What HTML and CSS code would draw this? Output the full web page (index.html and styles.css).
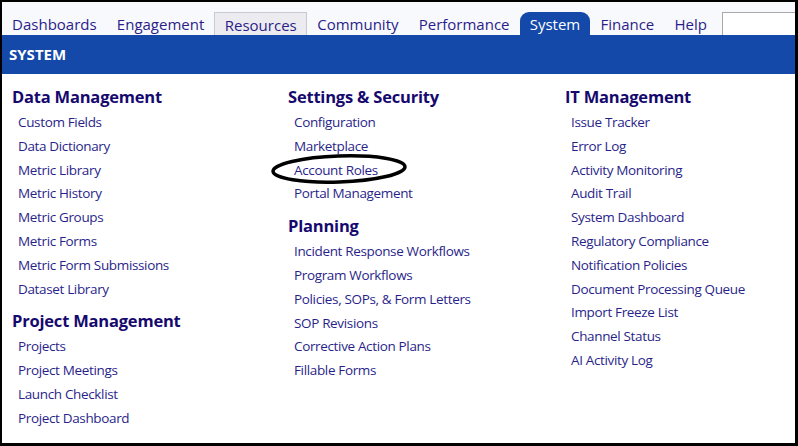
FILE: index.html
```html
<!DOCTYPE html>
<html lang="en">
<head>
    <meta charset="UTF-8">
    <meta name="viewport" content="width=device-width, initial-scale=1.0">
    <title>System</title>
    <link rel="stylesheet" href="styles.css">
</head>
<body>
<div class="frame">

    <nav class="topnav">
        <a class="tab">Dashboards</a>
        <a class="tab">Engagement</a>
        <a class="tab hover">Resources</a>
        <a class="tab">Community</a>
        <a class="tab">Performance</a>
        <a class="tab active">System</a>
        <a class="tab">Finance</a>
        <a class="tab">Help</a>
        <input class="search" type="text">
    </nav>

    <div class="section-bar">SYSTEM</div>

    <div class="menu">
        <div class="col">
            <h2>Data Management</h2>
            <a>Custom Fields</a>
            <a>Data Dictionary</a>
            <a>Metric Library</a>
            <a>Metric History</a>
            <a>Metric Groups</a>
            <a>Metric Forms</a>
            <a>Metric Form Submissions</a>
            <a>Dataset Library</a>
            <h2>Project Management</h2>
            <a>Projects</a>
            <a>Project Meetings</a>
            <a>Launch Checklist</a>
            <a>Project Dashboard</a>
        </div>
        <div class="col">
            <h2>Settings &amp; Security</h2>
            <a>Configuration</a>
            <a>Marketplace</a>
            <a class="circled">Account Roles
                <svg class="ring" width="140" height="36" viewBox="0 0 140 36">
                    <ellipse cx="70" cy="17" rx="66" ry="13" transform="rotate(-2 70 17)" fill="none" stroke="#000" stroke-width="3.5"/>
                </svg>
            </a>
            <a>Portal Management</a>
            <h2>Planning</h2>
            <a>Incident Response Workflows</a>
            <a>Program Workflows</a>
            <a>Policies, SOPs, &amp; Form Letters</a>
            <a>SOP Revisions</a>
            <a>Corrective Action Plans</a>
            <a>Fillable Forms</a>
        </div>
        <div class="col">
            <h2>IT Management</h2>
            <a>Issue Tracker</a>
            <a>Error Log</a>
            <a>Activity Monitoring</a>
            <a>Audit Trail</a>
            <a>System Dashboard</a>
            <a>Regulatory Compliance</a>
            <a>Notification Policies</a>
            <a>Document Processing Queue</a>
            <a>Import Freeze List</a>
            <a>Channel Status</a>
            <a>AI Activity Log</a>
        </div>
    </div>

</div>
</body>
</html>
```

FILE: styles.css
```css
body { margin: 0; font-family: "Open Sans", Arial, sans-serif; background: #fff; }
.frame { box-sizing: border-box; width: 798px; height: 446px; border: solid #000; border-width: 2px 3px 3px 2px; overflow: hidden; }

/* top navigation */
.topnav { display: flex; align-items: flex-end; height: 33px; background: #f8f9fd; white-space: nowrap; }
.tab { box-sizing: border-box; height: 23px; padding: 0 10.1px; font-size: 15px; line-height: 25px; color: #2b1d88; }
.tab.hover { background: #ececf0; border: 1px solid #c9c9d2; border-bottom: none; padding: 0 9.4px; line-height: 24px; }
.tab.active { background: #1448a9; color: #fff; border-radius: 9px 9px 0 0; }
.search { box-sizing: border-box; width: 90px; height: 23px; margin-left: 5px; border: 1px solid #a9a9a9; border-bottom: none; border-right: none; background: #fff; }

.section-bar { height: 39px; padding-left: 7px; background: #1448a9; color: #fff; font-size: 15px; font-weight: bold; line-height: 39px; }

/* system menu */
.menu { display: grid; grid-template-columns: 276px 277px 1fr; padding: 3px 0 0 10px; }
.col { display: flex; flex-direction: column; align-items: flex-start; }
.col h2 { margin: 6px 0 0; font-size: 16.5px; letter-spacing: -0.2px; line-height: 28px; color: #16096e; }
.col a { padding-left: 6px; font-size: 13.5px; letter-spacing: -0.35px; line-height: 23.8px; color: #2a1f8a; }
.circled { position: relative; }
.ring { position: absolute; left: -19px; top: -7px; }
```
